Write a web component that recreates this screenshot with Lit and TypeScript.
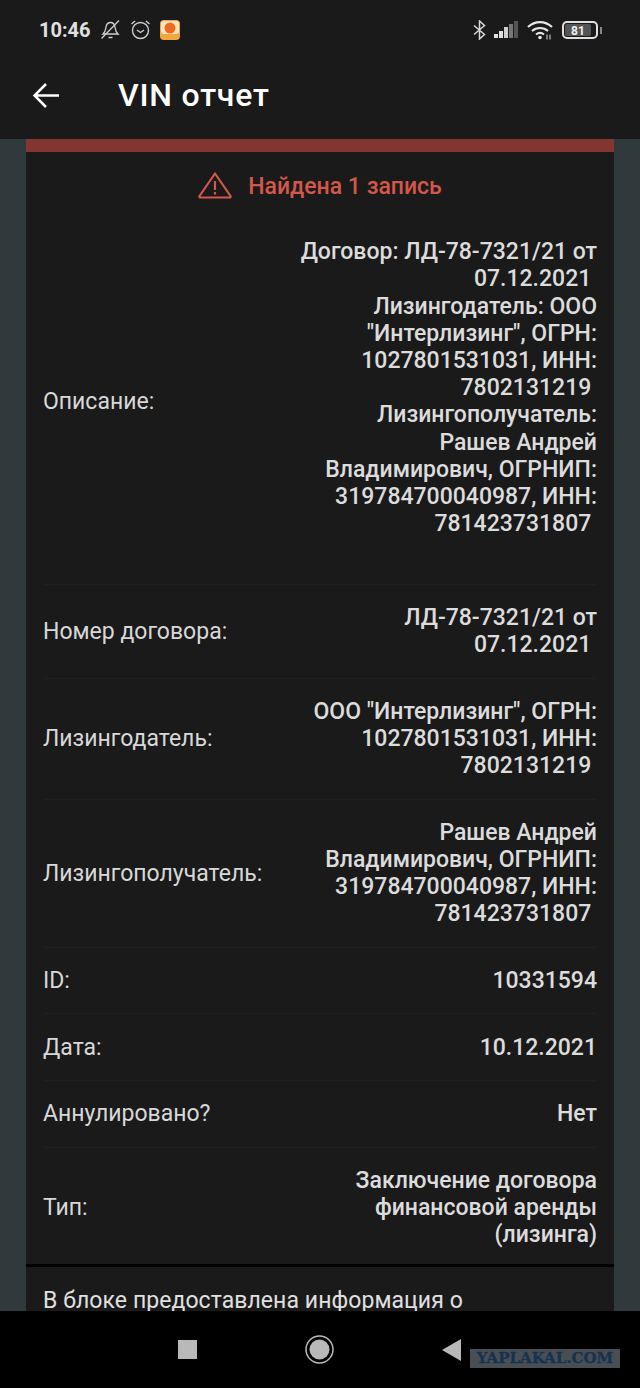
import { LitElement, html, css } from "lit";
import { customElement } from "lit/decorators.js";

const rows = [
  {
    label: "Описание:",
    lines: [
      "Договор: ЛД-78-7321/21 от 07.12.2021 ",
      'Лизингодатель: ООО "Интерлизинг", ОГРН: 1027801531031, ИНН: 7802131219 ',
      "Лизингополучатель:",
      "Рашев Андрей Владимирович, ОГРНИП: 319784700040987, ИНН: 781423731807 ",
      "\u00a0",
    ],
  },
  { label: "Номер договора:", lines: ["ЛД-78-7321/21 от 07.12.2021 "] },
  { label: "Лизингодатель:", lines: ['ООО "Интерлизинг", ОГРН: 1027801531031, ИНН: 7802131219 '] },
  { label: "Лизингополучатель:", lines: ["Рашев Андрей Владимирович, ОГРНИП: 319784700040987, ИНН: 781423731807 "] },
  { label: "ID:", lines: ["10331594"] },
  { label: "Дата:", lines: ["10.12.2021"] },
  { label: "Аннулировано?", lines: ["Нет"] },
  { label: "Тип:", lines: ["Заключение договора финансовой аренды (лизинга)"] },
];

@customElement("app-root")
export class AppRoot extends LitElement {
  static styles = css`
    :host {
      display: block;
      font-family: Roboto, "Noto Sans", sans-serif;
    }
    .page {
      height: 1388px;
      display: flex;
      flex-direction: column;
      overflow: hidden;
      background: #30393c;
    }
    .status {
      height: 56px;
      flex: none;
      background: #1a1a1a;
      display: flex;
      align-items: center;
      padding: 3px 38px 0 39px;
      box-sizing: border-box;
      color: #e0e0e0;
    }
    .time {
      font-size: 20px;
      font-weight: 700;
      margin-right: 9px;
    }
    .status svg {
      display: block;
      flex: none;
    }
    .status .gap-l {
      margin-left: 9px;
    }
    .spacer {
      flex: 1;
    }
    .toolbar {
      height: 83px;
      flex: none;
      background: #1a1a1a;
      display: flex;
      align-items: center;
      padding: 0 0 5px 33px;
      box-sizing: border-box;
      color: #fff;
    }
    .title {
      font-size: 32px;
      font-weight: 500;
      margin-left: 59px;
      letter-spacing: 0.8px;
    }
    .content {
      flex: 1;
      min-height: 0;
      overflow: hidden;
      padding: 0 26px;
    }
    .card {
      background: #1a1a1a;
      border-top: 13px solid #83362f;
      color: #dcdcdc;
      font-size: 23px;
      line-height: 27.2px;
    }
    .alert {
      height: 67px;
      display: flex;
      align-items: center;
      justify-content: center;
      gap: 16px;
      color: #d3574b;
      font-weight: 500;
    }
    .alert span {
      margin-top: 2px;
    }
    .rows {
      padding: 0 17px;
    }
    .row {
      display: flex;
      justify-content: space-between;
      align-items: center;
      gap: 20px;
      padding: 19.2px 0;
      border-bottom: 1px solid #202020;
    }
    .row:last-child {
      border-bottom: none;
      padding-bottom: 16px;
    }
    .label {
      flex: none;
      color: #d8d8d8;
    }
    .value {
      max-width: 300px;
      text-align: right;
      font-weight: 500;
    }
    .value div {
      white-space: pre-wrap;
    }
    .note {
      border-top: 3px solid #000;
      padding: 20px 17px 0;
      color: #e0e0e0;
      letter-spacing: 0.07px;
    }
    .nav {
      height: 77px;
      flex: none;
      background: #000;
      display: flex;
      align-items: center;
      position: relative;
      box-sizing: border-box;
    }
    .nav-icons {
      display: flex;
      align-items: center;
      padding-left: 178px;
      gap: 108px;
    }
    .nav-icons svg {
      display: block;
    }
    .stamp {
      position: absolute;
      left: 470px;
      top: 38px;
      width: 150px;
      height: 19px;
      background: #494e55;
      color: #17324f;
      font-family: "DejaVu Serif", serif;
      font-weight: 700;
      font-size: 15px;
      line-height: 19px;
      text-align: center;
      -webkit-text-stroke: 0.3px #17324f;
    }
  `;

  render() {
    return html`
      <div class="page">
        <div class="status">
          <span class="time">10:46</span>
          <svg width="21" height="21" viewBox="0 0 21 21" fill="none" stroke="#cfcfcf" stroke-width="1.300">
            <path d="M3 15c2.500-2 2.500-4 3-7 .5-3 2.500-4.500 4.500-4.500S14.500 5 15 8c.5 3 .5 5 3 7H3z" />
            <path d="M8.500 18.500h4M1.500 19.500L19 1.500" />
          </svg>
          <svg class="gap-l" width="21" height="21" viewBox="0 0 21 21" fill="none" stroke="#cfcfcf" stroke-width="1.400">
            <circle cx="10.500" cy="11.500" r="8" />
            <path d="M7 11l3.500 2.500L14 11M1.500 5L5 2M19.500 5L16 2" />
          </svg>
          <svg class="gap-l" width="20" height="20" viewBox="0 0 20 20">
            <rect width="20" height="20" rx="4" fill="#f4a640" />
            <rect x="1" y="1" width="18" height="13" rx="3" fill="#fbe3c4" />
            <circle cx="10" cy="8" r="5.500" fill="#ee6a1f" />
          </svg>
          <span class="spacer"></span>
          <svg width="13" height="20" viewBox="0 0 13 20" fill="none" stroke="#d8d8d8" stroke-width="1.500">
            <path d="M1 5.500l10.500 9-5 4.500V1l5 4.500-10.500 9" />
          </svg>
          <svg style="margin-left:8px" width="24" height="17" viewBox="0 0 24 17">
            <rect x="0" y="13" width="4" height="4" fill="#e0e0e0" />
            <rect x="5" y="10" width="4" height="7" fill="#e0e0e0" />
            <rect x="10" y="6" width="4" height="11" fill="#d0d0d0" />
            <rect x="15" y="3" width="4" height="14" fill="#777" />
            <rect x="20" y="0" width="4" height="17" fill="#555" />
          </svg>
          <svg style="margin-left:9px" width="26" height="20" viewBox="0 0 26 20" fill="none" stroke="#e8e8e8" stroke-width="2.200">
            <path d="M1 7c7-6.500 17-6.500 24 0M5 11c4.500-4 11.500-4 16 0M9 14.500c2.500-2 5.500-2 8 0" />
            <circle cx="13" cy="17.500" r="1.800" fill="#e8e8e8" stroke="none" />
            <path d="M20 14.500v5M23 14.500v5" stroke-width="1.200" stroke="#bbb" />
          </svg>
          <svg class="gap-l" width="40" height="18" viewBox="0 0 40 18">
            <rect x="1" y="1" width="34" height="16" rx="4" fill="none" stroke="#e0e0e0" stroke-width="2" />
            <rect x="3" y="3" width="26" height="12" rx="2" fill="#555" />
            <text x="16" y="14" font-size="12" font-weight="700" text-anchor="middle" fill="#eee" font-family="Roboto">81</text>
            <rect x="38" y="6" width="2" height="7" fill="#888" />
          </svg>
        </div>
        <div class="toolbar">
          <svg width="26" height="25" viewBox="0 0 26 25" fill="none" stroke="#fff" stroke-width="2.500">
            <path d="M26 12.500H2M13 1L1.500 12.500 13 24" />
          </svg>
          <span class="title">VIN отчет</span>
        </div>
        <div class="content">
          <div class="card">
            <div class="alert">
              <svg width="34" height="27" viewBox="0 0 34 27" fill="none" stroke="#d3574b" stroke-width="2.200" stroke-linejoin="round">
                <path d="M17 1.500L1.500 24a1 1 0 0 0 1 1.500h29a1 1 0 0 0 1-1.500L17 1.500z" />
                <path d="M17 9v9M17 20v2.500" />
              </svg>
              <span>Найдена 1 запись</span>
            </div>
            <div class="rows">
              ${rows.map(
                (r) => html`
                  <div class="row">
                    <span class="label">${r.label}</span>
                    <div class="value">${r.lines.map((l) => html`<div>${l}</div>`)}</div>
                  </div>
                `
              )}
            </div>
            <div class="note">В блоке предоставлена информация о</div>
          </div>
        </div>
        <div class="nav">
          <div class="nav-icons">
            <svg width="19" height="19" viewBox="0 0 19 19"><rect width="19" height="19" fill="#b9b9b9" /></svg>
            <svg width="29" height="29" viewBox="0 0 29 29" fill="none">
              <circle cx="14.500" cy="14.500" r="13.500" stroke="#b9b9b9" stroke-width="1.500" />
              <circle cx="14.500" cy="14.500" r="10" fill="#b9b9b9" />
            </svg>
            <svg width="19" height="22" viewBox="0 0 19 22"><path d="M19 0v22L0 11z" fill="#b9b9b9" /></svg>
          </div>
          <div class="stamp">YAPLAKAL.COM</div>
        </div>
      </div>
    `;
  }
}
